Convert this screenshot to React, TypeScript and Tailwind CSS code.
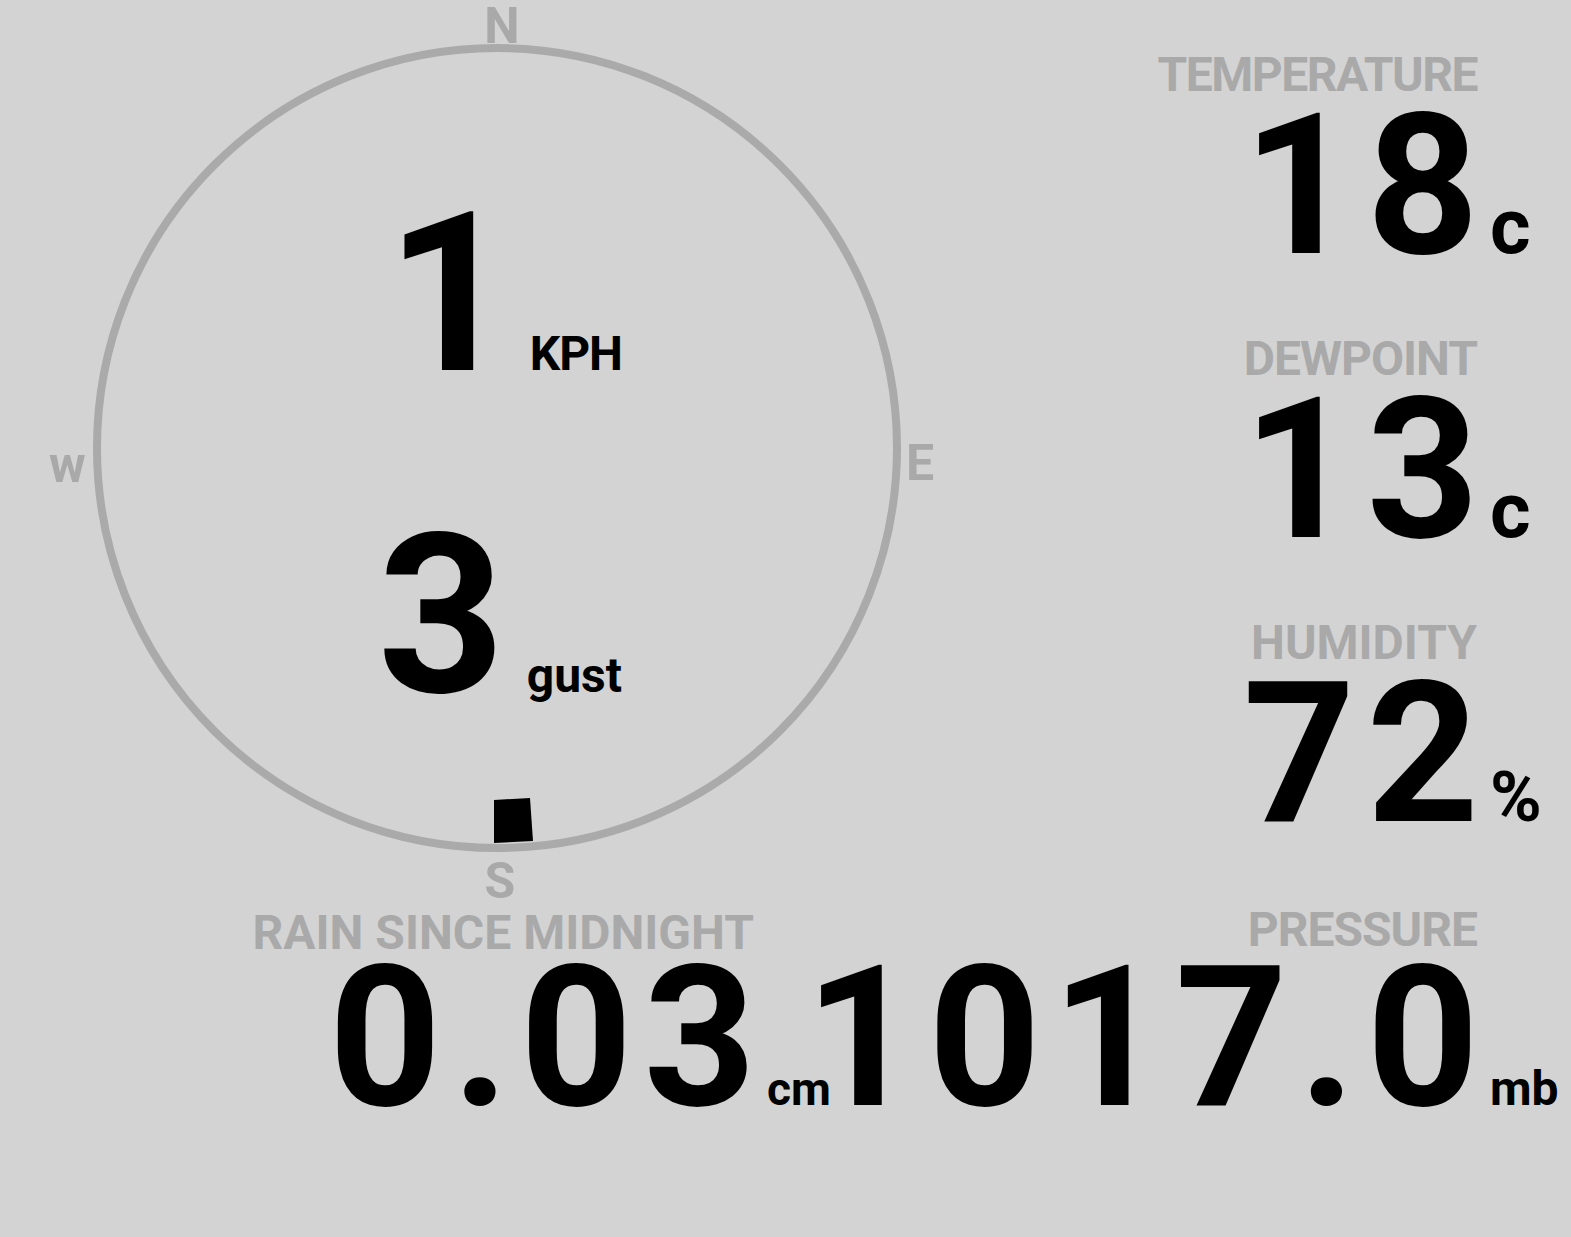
const LABEL = "text-[#a9a9a9] text-[48px] leading-[48px]";
const BIG = "text-[196px] leading-[150px] tracking-[11px] text-black";

type StatProps = {
  label: string;
  value: string;
  unit: string;
  unitClass: string;
  labelClass?: string;
};

function Stat({ label, value, unit, unitClass, labelClass = "tracking-[-1px]" }: StatProps) {
  return (
    <div className="flex flex-col items-end">
      <div className={`mr-[94px] whitespace-nowrap ${LABEL} ${labelClass}`}>{label}</div>
      <div className="mt-[12px] flex items-baseline whitespace-nowrap">
        <span className={`${BIG} mr-[-16px]`}>{value}</span>
        <span className={`w-[97px] pl-[16px] text-black ${unitClass}`}>{unit}</span>
      </div>
    </div>
  );
}

function Compass() {
  return (
    <div className="relative h-full w-[1000px] shrink-0">
      <svg className="absolute inset-0" width="1000" height="903" viewBox="0 0 1000 903">
        <circle cx="497" cy="448" r="400" fill="none" stroke="#aaaaaa" strokeWidth="8" />
        <polygon points="494,800 530,798 533,841 494,843" fill="#000" />
      </svg>

      <span className="absolute left-[502px] top-[1px] -translate-x-1/2 text-[50px] leading-[50px] text-[#a9a9a9]">N</span>
      <span className="absolute left-[906px] top-[438px] text-[50px] leading-[50px] text-[#a9a9a9]">E</span>
      <span className="absolute left-[500px] top-[856px] -translate-x-1/2 text-[50px] leading-[50px] text-[#a9a9a9]">S</span>
      <span className="absolute left-[49px] top-[440px] text-[50px] leading-[50px] text-[#a9a9a9]">w</span>

      <div className="relative flex w-[622px] flex-col items-end pt-[183px]">
        <div className="flex items-baseline">
          <span className="text-[222px] leading-[222px] text-black">1</span>
          <span className="ml-[16px] text-[48px] tracking-[-1px] text-black">KPH</span>
        </div>
        <div className="mt-[100px] flex items-baseline">
          <span className="text-[222px] leading-[222px] text-black">3</span>
          <span className="ml-[22px] text-[48px] text-black">gust</span>
        </div>
      </div>
    </div>
  );
}

export default function App() {
  return (
    <div className="flex h-[1237px] w-full flex-col overflow-hidden bg-[#d3d3d3] font-['Roboto','Liberation_Sans',sans-serif] font-bold">
      <div className="flex h-[903px] shrink-0">
        <Compass />
        <div className="flex min-w-0 flex-1 flex-col pt-[51px]">
          <div className="h-[284px]">
            <Stat label="TEMPERATURE" value="18" unit="c" unitClass="text-[78px]" labelClass="tracking-[-1.5px]" />
          </div>
          <div className="h-[284px]">
            <Stat label="DEWPOINT" value="13" unit="c" unitClass="text-[78px]" />
          </div>
          <div className="h-[284px]">
            <Stat label="HUMIDITY" value="72" unit="%" unitClass="text-[70px]" labelClass="tracking-[0px]" />
          </div>
        </div>
      </div>
      <div className="flex">
        <div className="w-[848px] shrink-0">
          <Stat
            label="RAIN SINCE MIDNIGHT"
            value="0.03"
            unit="cm"
            unitClass="text-[46px]"
            labelClass="mt-[6px] mb-[-6px] tracking-[0px]"
          />
        </div>
        <div className="min-w-0 flex-1 pt-[3px]">
          <Stat label="PRESSURE" value="1017.0" unit="mb" unitClass="text-[48px]" labelClass="mb-[-3px] tracking-[-1px]" />
        </div>
      </div>
    </div>
  );
}
